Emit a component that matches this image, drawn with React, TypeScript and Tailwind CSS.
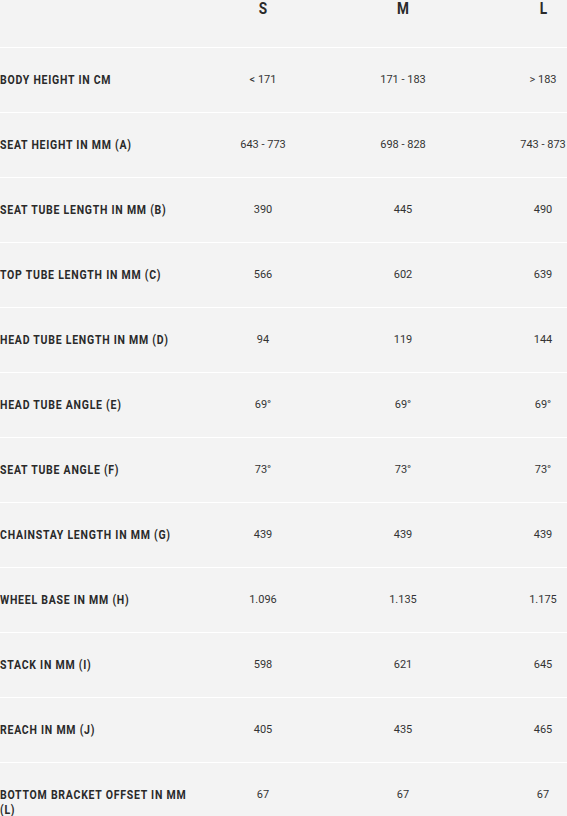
import React from "react";

const sizes = ["S", "M", "L"];

const rows: [string, string, string, string][] = [
  ["Body height in cm", "< 171", "171 - 183", "> 183"],
  ["Seat height in mm (A)", "643 - 773", "698 - 828", "743 - 873"],
  ["Seat tube length in mm (B)", "390", "445", "490"],
  ["Top tube length in mm (C)", "566", "602", "639"],
  ["Head tube length in mm (D)", "94", "119", "144"],
  ["Head tube angle (E)", "69°", "69°", "69°"],
  ["Seat tube angle (F)", "73°", "73°", "73°"],
  ["Chainstay length in mm (G)", "439", "439", "439"],
  ["Wheel base in mm (H)", "1.096", "1.135", "1.175"],
  ["Stack in mm (I)", "598", "621", "645"],
  ["Reach in mm (J)", "405", "435", "465"],
  ["Bottom bracket offset in mm (L)", "67", "67", "67"],
];

export default function App() {
  return (
    <div className="w-[567px] h-[816px] overflow-hidden bg-[#f3f3f3] text-[#2a2a2a] font-['Roboto',sans-serif]">
      <div className="w-[613px]">
        {/* sizes header */}
        <div className="grid grid-cols-[193px_140px_140px_140px] h-[47px] pt-[1px]">
          <div />
          {sizes.map((s) => (
            <div key={s} className="flex justify-center">
              <span className="inline-block scale-x-[0.85] font-bold text-[16px] leading-[16px]">
                {s}
              </span>
            </div>
          ))}
        </div>
        {rows.map((r) => (
          <div
            key={r[0]}
            className="grid grid-cols-[193px_140px_140px_140px] border-t border-white pt-[24px] pb-[25px]"
          >
            <div className="relative">
              {/* condensed look: narrow the label horizontally */}
              <div className="w-[228px] origin-left scale-x-[0.84] uppercase font-bold text-[12.5px] leading-[15px] tracking-[0.9px]">
                {r[0]}
              </div>
            </div>
            {r.slice(1).map((v, i) => (
              <div
                key={i}
                className="text-center text-[11px] leading-[15px] text-[#333]"
              >
                {v}
              </div>
            ))}
          </div>
        ))}
      </div>
    </div>
  );
}
